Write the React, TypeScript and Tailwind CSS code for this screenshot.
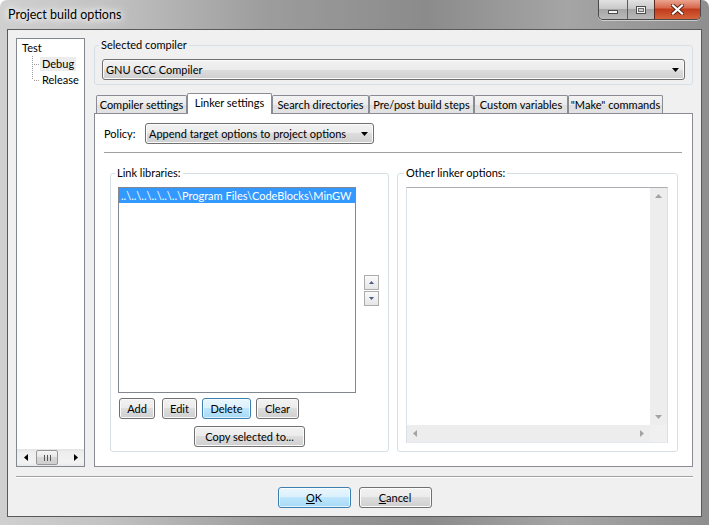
import React from "react";

const FONT = "font-['Lato','Noto_Sans',sans-serif]";

const BTN =
  "border-[#707070] bg-[linear-gradient(#f2f2f2_0%,#ebebeb_50%,#dddddd_50%,#cfcfcf_100%)] shadow-[inset_0_0_0_1px_#fbfbfb]";
const BTN_FOCUS =
  "border-[#3c7fb1] bg-[linear-gradient(#eaf6fd_0%,#d9f0fc_50%,#bee6fd_50%,#a7d9f5_100%)] shadow-[inset_0_0_0_1px_#ffffffaa]";

function Btn({
  children,
  className = "",
  focused = false,
}: {
  children: React.ReactNode;
  className?: string;
  focused?: boolean;
}) {
  return (
    <div
      className={`flex h-[21px] items-center justify-center rounded-[3px] border ${
        focused ? BTN_FOCUS : BTN
      } ${className}`}
    >
      {children}
    </div>
  );
}

function DownTri({ color = "#000" }: { color?: string }) {
  return (
    <svg width="7" height="4" viewBox="0 0 7 4">
      <polygon points="0,0 7,0 3.5,4" fill={color} />
    </svg>
  );
}

function Combo({ text, className = "" }: { text: string; className?: string }) {
  return (
    <div
      className={`flex h-[21px] items-center justify-between rounded-[3px] border pl-[3px] pr-[5px] ${BTN} ${className}`}
    >
      <span className="whitespace-nowrap">{text}</span>
      <DownTri />
    </div>
  );
}

function Tri({ dir, color, w, h }: { dir: "up" | "down" | "left" | "right"; color: string; w: number; h: number }) {
  let pts = "";
  if (dir === "up") pts = `0,${h} ${w},${h} ${w / 2},0`;
  if (dir === "down") pts = `0,0 ${w},0 ${w / 2},${h}`;
  if (dir === "left") pts = `${w},0 ${w},${h} 0,${h / 2}`;
  if (dir === "right") pts = `0,0 0,${h} ${w},${h / 2}`;
  return (
    <svg width={w} height={h} viewBox={`0 0 ${w} ${h}`}>
      <polygon points={pts} fill={color} />
    </svg>
  );
}

function TreeConnector({ last }: { last: boolean }) {
  const dots: React.ReactNode[] = [];
  const vEnd = last ? 8 : 16;
  for (let y = 0; y < vEnd; y += 2) dots.push(<rect key={`v${y}`} x={15} y={y} width={1} height={1} fill="#a0a0a0" />);
  for (let x = 17; x < 23; x += 2) dots.push(<rect key={`h${x}`} x={x} y={8} width={1} height={1} fill="#a0a0a0" />);
  return (
    <svg width="23" height="16" viewBox="0 0 23 16" className="shrink-0" shapeRendering="crispEdges">
      {dots}
    </svg>
  );
}

function Tree() {
  return (
    <div className="flex w-[69px] flex-col border border-[#828790] bg-white">
      <div className="pt-[1px]">
        <div className="flex h-[16px] items-center pl-[5px]">Test</div>
        <div className="flex h-[16px] items-center">
          <TreeConnector last={false} />
          <span className="bg-[#ececec] px-[2px] leading-[14px]">Debug</span>
        </div>
        <div className="flex h-[16px] items-center">
          <TreeConnector last />
          <span className="px-[2px] leading-[14px]">Release</span>
        </div>
      </div>
      <div className="flex-1" />
      <div className="flex h-[17px] items-center bg-[linear-gradient(#e3e3e3_0%,#eeeeee_20%,#f2f2f2_80%,#e8e8e8_100%)]">
        <div className="flex w-[17px] items-center justify-center">
          <Tri dir="left" color="#000" w={4} h={7} />
        </div>
        <div className="ml-[2px] flex h-[15px] w-[22px] items-center justify-center gap-[2px] rounded-[2px] border border-[#979797] bg-[linear-gradient(#f5f5f5_0%,#e4e4e4_50%,#d6d6d6_50%,#cfcfcf_100%)]">
          <div className="h-[6px] w-px bg-[#555]" />
          <div className="h-[6px] w-px bg-[#555]" />
          <div className="h-[6px] w-px bg-[#555]" />
        </div>
        <div className="flex-1" />
        <div className="flex w-[17px] items-center justify-center">
          <Tri dir="right" color="#000" w={4} h={7} />
        </div>
      </div>
    </div>
  );
}

function Tab({ label, className, selected = false }: { label: string; className: string; selected?: boolean }) {
  return (
    <div
      className={`flex shrink-0 items-center justify-center rounded-t-[2px] border border-b-0 border-[#898c95] whitespace-nowrap ${
        selected
          ? "relative z-10 mb-[-1px] h-[21px] bg-white pb-[3px]"
          : "h-[18px] bg-[linear-gradient(#f3f3f3_0%,#ebebeb_50%,#dedede_50%,#e3e3e3_100%)]"
      } ${className}`}
    >
      {label}
    </div>
  );
}

function SmallSpin({ dir }: { dir: "up" | "down" }) {
  return (
    <div className="flex h-[15px] w-[15px] items-center justify-center border border-[#acacac] bg-[linear-gradient(#fafafa,#e6e6e6)]">
      <Tri dir={dir} color="#4d5a82" w={5} h={3} />
    </div>
  );
}

export default function App() {
  return (
    <div
      className={`${FONT} flex h-[525px] w-[709px] flex-col overflow-hidden rounded-t-[7px] bg-[linear-gradient(90deg,#d0d0d0_0%,#c2c2c2_15%,#9c9c9c_38%,#8b8b8b_60%,#a5a5a5_80%,#8e8e8e_100%)] text-[11px] leading-[14px] text-black`}
    >
      {/* title bar */}
      <div className="flex h-[29px] shrink-0">
        <div className="pl-[8px] pt-[8px] text-[12.5px] [text-shadow:0_0_6px_#fff,0_0_10px_#fff,0_0_16px_#fff]">
          Project build options
        </div>
        <div className="flex-1" />
        <div className="mr-[8px] flex h-[20px] overflow-hidden rounded-b-[5px] border border-t-0 border-[#4a4a4a] shadow-[0_1px_0_#ffffff80]">
          <div className="flex w-[28px] items-end justify-center bg-[linear-gradient(#e2e2e2_0%,#c9c9c9_45%,#a6a6a6_50%,#b9b9b9_100%)] pb-[5px]">
            <div className="h-[4px] w-[10px] border border-[#4b4b4b] bg-[#f4f4f4]" />
          </div>
          <div className="flex w-[27px] items-center justify-center border-l border-[#5a5a5a] bg-[linear-gradient(#e2e2e2_0%,#c9c9c9_45%,#a6a6a6_50%,#b9b9b9_100%)]">
            <div className="flex h-[8px] w-[10px] items-center justify-center border border-[#4b4b4b] bg-[#f4f4f4]">
              <div className="h-[4px] w-[6px] border border-[#6b6b6b] bg-[#cfcfcf]" />
            </div>
          </div>
          <div className="flex w-[46px] items-center justify-center border-l border-[#5a2a20] bg-[linear-gradient(#eba490_0%,#d86a4f_40%,#c23b1c_50%,#d4643c_100%)]">
            <svg width="13" height="11" viewBox="0 0 13 11">
              <path d="M2 1.5 L11 9.5 M11 1.5 L2 9.5" stroke="#5b2215" strokeWidth="4" strokeLinecap="square" />
              <path d="M2 1.5 L11 9.5 M11 1.5 L2 9.5" stroke="#ffffff" strokeWidth="2.2" strokeLinecap="square" />
            </svg>
          </div>
        </div>
      </div>

      {/* client */}
      <div className="ml-[7px] mr-[7px] flex h-[488px] shrink-0 flex-col border border-[#5a5a5a] bg-[#f0f0f0] px-[8px] pt-[8px]">
        <div className="flex h-[429px] shrink-0 gap-[9px]">
          <Tree />
          <div className="flex flex-1 flex-col">
            <fieldset className="rounded-[3px] border border-[#d5dfe5]">
              <legend className="ml-[4px] px-[2px] leading-[14px]">Selected compiler</legend>
              <div className="px-[7px] pb-[4px] pt-[7px]">
                <Combo text="GNU GCC Compiler" className="w-full" />
              </div>
            </fieldset>

            <div className="mt-[8px] flex h-[20px] shrink-0 items-end pl-[2px]">
              <Tab label="Compiler settings" className="w-[91px]" />
              <Tab label="Linker settings" className="w-[85px]" selected />
              <Tab label="Search directories" className="w-[97px]" />
              <Tab label="Pre/post build steps" className="w-[105px]" />
              <Tab label="Custom variables" className="w-[94px]" />
              <Tab label={'"Make" commands'} className="w-[95px]" />
            </div>

            <div className="flex flex-1 flex-col border border-[#898c95] bg-white">
              <div className="flex items-center pl-[9px] pt-[9px]">
                <span className="w-[41px]">Policy:</span>
                <Combo text="Append target options to project options" className="w-[229px]" />
              </div>
              <div className="ml-[9px] mr-[10px] mt-[8px] h-px bg-[#a0a0a0]" />
              <div className="mt-[13px] flex gap-[8px] pl-[15px]">
                <fieldset className="w-[279px] rounded-[3px] border border-[#d5dfe5]">
                  <legend className="ml-[4px] px-[2px] leading-[14px]">Link libraries:</legend>
                  <div className="px-[7px] pb-[4px] pt-[7px]">
                    <div className="flex items-center gap-[8px]">
                      <div className="h-[206px] w-[238px] overflow-hidden border border-[#828790] bg-white">
                        <div className="h-[15px] whitespace-nowrap bg-[#3399ff] pl-[2px] leading-[15px] text-white">
                          {"..\\..\\..\\..\\..\\..\\Program Files\\CodeBlocks\\MinGW"}
                        </div>
                      </div>
                      <div className="flex flex-col gap-[1px]">
                        <SmallSpin dir="up" />
                        <SmallSpin dir="down" />
                      </div>
                    </div>
                    <div className="ml-[1px] mt-[5px] flex">
                      <Btn className="w-[36px]">Add</Btn>
                      <Btn className="ml-[7px] w-[35px]">Edit</Btn>
                      <Btn className="ml-[5px] w-[49px]" focused>
                        Delete
                      </Btn>
                      <Btn className="ml-[5px] w-[43px]">Clear</Btn>
                    </div>
                    <div className="mt-[7px] flex justify-center">
                      <Btn className="w-[111px]">Copy selected to...</Btn>
                    </div>
                  </div>
                </fieldset>

                <fieldset className="w-[281px] rounded-[3px] border border-[#d5dfe5]">
                  <legend className="ml-[6px] px-[2px] leading-[14px]">Other linker options:</legend>
                  <div className="pb-[8px] pl-[8px] pt-[7px]">
                    <div className="flex h-[256px] w-[262px] flex-col border border-[#abadb3] border-l-[#dbdfe6] border-r-[#dbdfe6] border-b-[#e3e9ef] bg-white">
                      <div className="flex flex-1">
                        <div className="flex-1" />
                        <div className="flex w-[17px] flex-col items-center justify-between bg-[#ededed] py-[6px]">
                          <Tri dir="up" color="#a3a3a3" w={7} h={4} />
                          <Tri dir="down" color="#a3a3a3" w={7} h={4} />
                        </div>
                      </div>
                      <div className="flex h-[17px]">
                        <div className="flex flex-1 items-center justify-between bg-[#ededed] px-[6px]">
                          <Tri dir="left" color="#a3a3a3" w={4} h={7} />
                          <Tri dir="right" color="#a3a3a3" w={4} h={7} />
                        </div>
                        <div className="w-[17px] bg-[#f0f0f0]" />
                      </div>
                    </div>
                  </div>
                </fieldset>
              </div>
            </div>
          </div>
        </div>

        <div className="mt-[9px] h-[2px] border-b border-t border-b-white border-t-[#a0a0a0]" />

        <div className="mt-[9px] flex justify-center gap-[8px]">
          <Btn className="w-[73px]" focused>
            <span>
              <span className="underline">O</span>K
            </span>
          </Btn>
          <Btn className="w-[73px]">
            <span>
              <span className="underline">C</span>ancel
            </span>
          </Btn>
        </div>
      </div>
    </div>
  );
}
